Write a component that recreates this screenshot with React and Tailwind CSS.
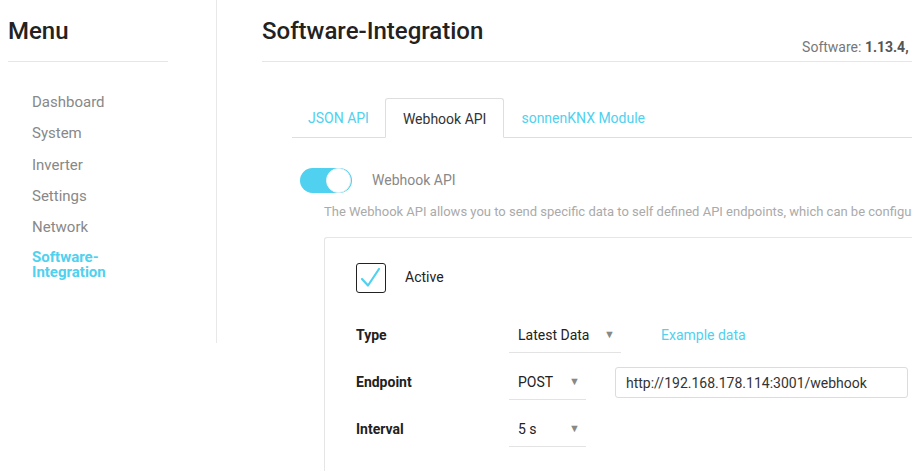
import React, { useState } from 'react';

const navItems = ["Dashboard", "System", "Inverter", "Settings", "Network"];

const Select = ({ value, width }) => (
    <div className={`${width} h-[34px] flex items-center justify-between pl-[9px] pr-[6px] border-b border-[#e3e3e3] text-[14px] text-[#222]`}>
        <span>{value}</span>
        <span className="text-[11px] text-[#888]">▼</span>
    </div>
);

const App = () => {
    const [active, setActive] = useState(true);

    return (
        <div className="w-[912px] h-[471px] overflow-hidden bg-white flex font-['Roboto',sans-serif]">
            {/* Sidebar */}
            <div className="w-[217px] shrink-0 h-[343px] border-r border-[#e8e8e8] pl-[8px]">
                <h1 className="text-[24px] font-medium text-[#222] leading-none pt-[19px] pb-[18px] w-[160px] border-b border-[#e6e6e6]">Menu</h1>
                <ul className="pl-[24px] pt-[31px] flex flex-col gap-[12.3px] text-[15px] leading-[19px] text-[#888]">
                    {navItems.map((item) => (
                        <li key={item}>{item}</li>
                    ))}
                    <li className="font-bold text-[#4fd1ef] leading-[15px] w-[100px] pt-[1px]">Software-Integration</li>
                </ul>
            </div>

            {/* Main */}
            <div className="flex-1 pl-[45px] overflow-hidden">
                <div className="flex justify-between h-[62px] border-b border-[#e6e6e6]">
                    <h2 className="text-[24px] font-medium text-[#222] pt-[17px] leading-[28px] whitespace-nowrap">Software-Integration</h2>
                    <div className="relative text-[14px] text-[#777] whitespace-nowrap pt-[37px] mr-[-9px]">
                        Software: <span className="font-bold text-[#555]">1.13.4, </span><span className="font-bold text-[#555]">B</span>
                        <span className="absolute right-[5px] top-[19px] text-[#f0a040] text-[12px]">:</span>
                    </div>
                </div>

                <div className="pl-[30px] pt-[36px]">
                    {/* Tabs */}
                    <div className="flex border-b border-[#dedede] h-[40px] text-[14px]">
                        <div className="px-[16px] pt-[10px] text-[#4fd1ef]">JSON API</div>
                        <div className="px-[17px] pt-[10px] text-[#333] border border-[#dedede] border-b-white rounded-t-[3px] -mb-px bg-white">Webhook API</div>
                        <div className="px-[17px] pt-[10px] text-[#4fd1ef]">sonnenKNX Module</div>
                    </div>

                    {/* Toggle */}
                    <div className="flex items-center pl-[8px] pt-[30px]">
                        <button onClick={() => setActive(!active)} className="relative w-[52px] h-[25px] rounded-full bg-[#4fd1ef]">
                            <span className="absolute right-[1px] top-[0px] w-[25px] h-[25px] rounded-full bg-white border border-[#f0f0f0]"></span>
                        </button>
                        <span className="ml-[20px] text-[14px] text-[#888]">Webhook API</span>
                    </div>
                    <p className="pl-[32px] pt-[9px] text-[13px] text-[#aaa] whitespace-nowrap">The Webhook API allows you to send specific data to self defined API endpoints, which can be configured below.</p>

                    {/* Card */}
                    <div className="ml-[32px] mt-[15px] border-l border-t border-[#e6e6e6] rounded-tl-[3px] h-[240px] pl-[31px] pt-[25px]">
                        <div className="flex items-center">
                            <button onClick={() => setActive(!active)} className="w-[30px] h-[30px] border border-[#222] rounded-[3px] flex items-center justify-center">
                                {active && (
                                    <svg width="24" height="24" viewBox="0 0 24 24" fill="none">
                                        <path d="M3 13 L9 19.5 L20 3" stroke="#4fd1ef" strokeWidth="2.2" strokeLinecap="round" strokeLinejoin="round" />
                                    </svg>
                                )}
                            </button>
                            <span className="ml-[19px] text-[14px] text-[#222]">Active</span>
                        </div>

                        <div className="grid grid-cols-[153px_1fr] items-center gap-y-[13px] mt-[26px] text-[14px]">
                            <span className="font-bold text-[#222]">Type</span>
                            <div className="flex items-center">
                                <Select value="Latest Data" width="w-[112px]" />
                                <span className="ml-[40px] text-[#4fd1ef]">Example data</span>
                            </div>
                            <span className="font-bold text-[#222]">Endpoint</span>
                            <div className="flex items-center">
                                <Select value="POST" width="w-[77px]" />
                                <input defaultValue="http://192.168.178.114:3001/webhook" className="ml-[29px] w-[293px] h-[31px] border border-[#dcdcdc] rounded-[3px] px-[10px] text-[14px] text-[#333] outline-none" />
                            </div>
                            <span className="font-bold text-[#222]">Interval</span>
                            <Select value="5 s" width="w-[77px]" />
                        </div>
                    </div>
                </div>
            </div>
        </div>
    );
};

export default App;
